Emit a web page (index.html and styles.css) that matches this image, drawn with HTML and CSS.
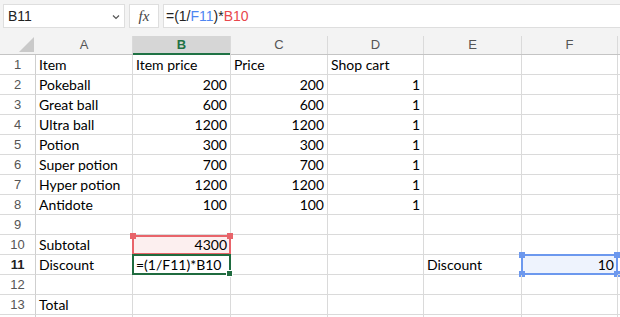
FILE: index.html
```
<!DOCTYPE html>
<html lang="en">
<head>
    <meta charset="UTF-8">
    <title>Shop cart</title>
    <link rel="stylesheet" href="styles.css">
</head>
<body>

    <!-- Formula bar -->
    <div class="toolbar">
        <div class="namebox">
            <span>B11</span>
            <svg class="chev" width="8" height="6" viewBox="0 0 8 6"><polyline points="1,1.5 4,4.5 7,1.5" fill="none" stroke="#555" stroke-width="1.2"/></svg>
        </div>
        <div class="fx">fx</div>
        <div class="formula">=(1/<span class="ref-blue">F11</span>)*<span class="ref-red">B10</span></div>
    </div>

    <!-- Sheet -->
    <div class="sheet">
        <div class="hrow">
            <div class="hcell rh corner"><span class="tri"></span></div>
            <div class="hcell ca">A</div>
            <div class="hcell cb active-col">B</div>
            <div class="hcell cc">C</div>
            <div class="hcell cd">D</div>
            <div class="hcell ce">E</div>
            <div class="hcell cf">F</div>
            <div class="hcell rest"></div>
        </div>

        <div class="row">
            <div class="cell rh">1</div>
            <div class="cell ca">Item</div>
            <div class="cell cb">Item price</div>
            <div class="cell cc">Price</div>
            <div class="cell cd">Shop cart</div>
            <div class="cell ce"></div>
            <div class="cell cf"></div>
            <div class="cell rest"></div>
        </div>
        <div class="row">
            <div class="cell rh">2</div>
            <div class="cell ca">Pokeball</div>
            <div class="cell cb num">200</div>
            <div class="cell cc num">200</div>
            <div class="cell cd num">1</div>
            <div class="cell ce"></div>
            <div class="cell cf"></div>
            <div class="cell rest"></div>
        </div>
        <div class="row">
            <div class="cell rh">3</div>
            <div class="cell ca">Great ball</div>
            <div class="cell cb num">600</div>
            <div class="cell cc num">600</div>
            <div class="cell cd num">1</div>
            <div class="cell ce"></div>
            <div class="cell cf"></div>
            <div class="cell rest"></div>
        </div>
        <div class="row">
            <div class="cell rh">4</div>
            <div class="cell ca">Ultra ball</div>
            <div class="cell cb num">1200</div>
            <div class="cell cc num">1200</div>
            <div class="cell cd num">1</div>
            <div class="cell ce"></div>
            <div class="cell cf"></div>
            <div class="cell rest"></div>
        </div>
        <div class="row">
            <div class="cell rh">5</div>
            <div class="cell ca">Potion</div>
            <div class="cell cb num">300</div>
            <div class="cell cc num">300</div>
            <div class="cell cd num">1</div>
            <div class="cell ce"></div>
            <div class="cell cf"></div>
            <div class="cell rest"></div>
        </div>
        <div class="row">
            <div class="cell rh">6</div>
            <div class="cell ca">Super potion</div>
            <div class="cell cb num">700</div>
            <div class="cell cc num">700</div>
            <div class="cell cd num">1</div>
            <div class="cell ce"></div>
            <div class="cell cf"></div>
            <div class="cell rest"></div>
        </div>
        <div class="row">
            <div class="cell rh">7</div>
            <div class="cell ca">Hyper potion</div>
            <div class="cell cb num">1200</div>
            <div class="cell cc num">1200</div>
            <div class="cell cd num">1</div>
            <div class="cell ce"></div>
            <div class="cell cf"></div>
            <div class="cell rest"></div>
        </div>
        <div class="row">
            <div class="cell rh">8</div>
            <div class="cell ca">Antidote</div>
            <div class="cell cb num">100</div>
            <div class="cell cc num">100</div>
            <div class="cell cd num">1</div>
            <div class="cell ce"></div>
            <div class="cell cf"></div>
            <div class="cell rest"></div>
        </div>
        <div class="row">
            <div class="cell rh">9</div>
            <div class="cell ca"></div>
            <div class="cell cb"></div>
            <div class="cell cc"></div>
            <div class="cell cd"></div>
            <div class="cell ce"></div>
            <div class="cell cf"></div>
            <div class="cell rest"></div>
        </div>
        <div class="row">
            <div class="cell rh">10</div>
            <div class="cell ca">Subtotal</div>
            <div class="cell cb num ref-red-cell">4300
                <span class="box box-red">
                    <i class="knob red tl"></i><i class="knob red tr"></i>
                </span>
            </div>
            <div class="cell cc"></div>
            <div class="cell cd"></div>
            <div class="cell ce"></div>
            <div class="cell cf"></div>
            <div class="cell rest"></div>
        </div>
        <div class="row">
            <div class="cell rh active-row">11</div>
            <div class="cell ca">Discount</div>
            <div class="cell cb editing">=(1/F11)*B10
                <span class="box box-green"><i class="fill-handle"></i></span>
            </div>
            <div class="cell cc"></div>
            <div class="cell cd"></div>
            <div class="cell ce">Discount</div>
            <div class="cell cf num ref-blue-cell">10
                <span class="box box-blue">
                    <i class="knob blue tl"></i><i class="knob blue tr"></i>
                    <i class="knob blue bl"></i><i class="knob blue br"></i>
                </span>
            </div>
            <div class="cell rest"></div>
        </div>
        <div class="row">
            <div class="cell rh">12</div>
            <div class="cell ca"></div>
            <div class="cell cb"></div>
            <div class="cell cc"></div>
            <div class="cell cd"></div>
            <div class="cell ce"></div>
            <div class="cell cf"></div>
            <div class="cell rest"></div>
        </div>
        <div class="row">
            <div class="cell rh">13</div>
            <div class="cell ca">Total</div>
            <div class="cell cb"></div>
            <div class="cell cc"></div>
            <div class="cell cd"></div>
            <div class="cell ce"></div>
            <div class="cell cf"></div>
            <div class="cell rest"></div>
        </div>
        <div class="row">
            <div class="cell rh"></div>
            <div class="cell ca"></div>
            <div class="cell cb"></div>
            <div class="cell cc"></div>
            <div class="cell cd"></div>
            <div class="cell ce"></div>
            <div class="cell cf"></div>
            <div class="cell rest"></div>
        </div>
    </div>

</body>
</html>
```
FILE: styles.css
```
body {
    margin: 0;
    font-family: 'Liberation Sans', Arial, sans-serif;
    background-color: #fff;
    overflow: hidden;
}

/* Formula bar */
.toolbar {
    display: flex;
    gap: 4px;
    height: 35px;
    padding: 4px 0 0 3px;
    box-sizing: border-box;
    background-color: #f3f3f3;
}

.namebox,
.fx,
.formula {
    height: 24px;
    box-sizing: border-box;
    background-color: #fff;
    border: 1px solid #dedede;
    display: flex;
    align-items: center;
}

.namebox {
    width: 122px;
    justify-content: space-between;
    padding: 0 4px 0 4px;
    font-size: 14px;
    color: #222;
}

.chev {
    margin-top: 1px;
}

.fx {
    width: 30px;
    justify-content: center;
    font-family: 'Liberation Serif', serif;
    font-style: italic;
    font-size: 15px;
    color: #444;
}

.formula {
    flex: 1;
    margin-right: -4px;
    padding-left: 2px;
    font-size: 14px;
    color: #222;
}

.ref-blue {
    color: #4e86f2;
}

.ref-red {
    color: #e8474c;
}

/* Grid */
.sheet {
    height: 282px;
    overflow: hidden;
}

.hrow,
.row {
    display: flex;
}

.hrow {
    height: 19px;
    background-color: #f3f3f3;
    border-bottom: 1px solid #c4c4c4;
}

.row {
    height: 20px;
}

.hcell,
.cell {
    box-sizing: border-box;
    flex-shrink: 0;
    white-space: nowrap;
    position: relative;
}

.hcell {
    border-right: 1px solid #dadada;
    margin-top: 1px;
    text-align: center;
    font-size: 13px;
    line-height: 18px;
    color: #555;
}

.hcell.rest {
    border-right: none;
}

.cell {
    border-right: 1px solid #dadada;
    border-bottom: 1px solid #dadada;
    padding: 0 3px;
    font-family: 'Lato', sans-serif;
    font-size: 14px;
    line-height: 19px;
    color: #000;
}

.rh {
    width: 36px;
    text-align: center;
    padding: 0;
    font-family: 'Liberation Sans', Arial, sans-serif;
    font-size: 13px;
    color: #555;
    border-right-color: #cfcfcf;
}

.ca { width: 97px; }
.cb { width: 98px; }
.cc { width: 97px; }
.cd { width: 96px; }
.ce { width: 98px; }
.cf { width: 96px; }
.rest { flex: 1; border-right: none; }

.num {
    text-align: right;
}

.corner {
    background-color: #f3f3f3;
    border-right: none;
}

.tri {
    position: absolute;
    right: 2px;
    bottom: 2px;
    width: 0;
    height: 0;
    border-left: 15px solid transparent;
    border-bottom: 15px solid #c9c9c9;
}

.active-col {
    background-color: #d6d6d6;
    color: #1f7244;
    font-weight: bold;
    box-shadow: inset 0 -2px 0 #1f7244;
    margin-bottom: -1px;
}

.active-row {
    color: #222;
    font-weight: bold;
}

/* Reference highlights */
.ref-red-cell {
    background-color: #fcefef;
}

.ref-blue-cell {
    background-color: #eef3fd;
}

.box {
    position: absolute;
    left: -1px;
    top: -1px;
    right: -1px;
    bottom: -1px;
    border: 2px solid;
    pointer-events: none;
}

.box-red {
    border-color: #e8646a;
    top: 0;
}

.box-green {
    border-color: #1f6b3f;
    z-index: 2;
}

.box-blue {
    border-color: #6c98ee;
}

.knob {
    position: absolute;
    width: 6px;
    height: 6px;
}

.knob.red { background-color: #e8646a; }
.knob.blue { background-color: #6c98ee; }

.tl { left: -4px; top: -4px; }
.tr { right: -4px; top: -4px; }
.bl { left: -4px; bottom: -4px; }
.br { right: -4px; bottom: -4px; }

.fill-handle {
    position: absolute;
    right: -4px;
    bottom: -4px;
    width: 5px;
    height: 5px;
    background-color: #1f6b3f;
    border: 1px solid #fff;
}
```
